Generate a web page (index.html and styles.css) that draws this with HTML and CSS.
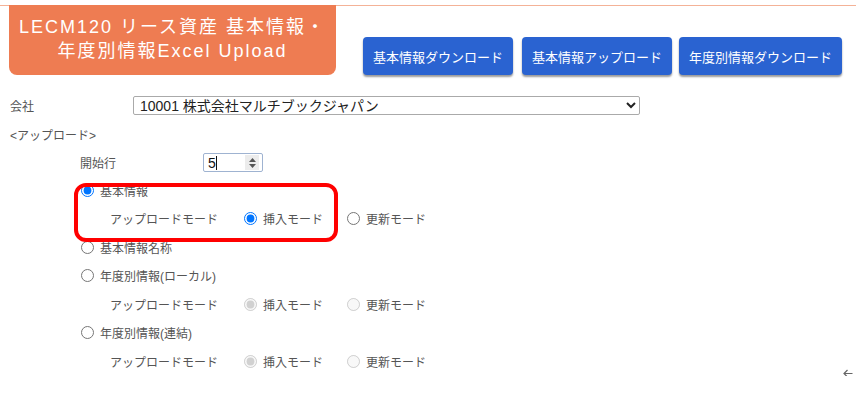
FILE: index.html
```html
<!DOCTYPE html>
<html lang="ja">
<head>
    <meta charset="UTF-8">
    <meta name="viewport" content="width=device-width, initial-scale=1.0">
    <title>LECM120 リース資産 Excel Upload</title>
    <link rel="stylesheet" href="styles.css">
</head>
<body>
    <header class="top">
        <div class="title">LECM120 リース資産 基本情報・<br>年度別情報Excel Upload</div>
        <div class="actions">
            <button class="btn">基本情報ダウンロード</button>
            <button class="btn">基本情報アップロード</button>
            <button class="btn">年度別情報ダウンロード</button>
        </div>
    </header>

    <main class="content">
        <div class="company">
            <label class="company-label" for="company">会社</label>
            <select id="company" class="company-select">
                <option>10001 株式会社マルチブックジャパン</option>
            </select>
        </div>

        <div class="section-title">&lt;アップロード&gt;</div>

        <div class="upload">
            <div class="row start-row">
                <span class="start-label">開始行</span>
                <div class="num-input">
                    <span class="num-value">5</span><span class="caret"></span>
                    <span class="spin">
                        <svg width="9" height="12" viewBox="0 0 9 12"><path d="M4.5 1 L8 5 H1 Z M4.5 11 L8 7 H1 Z" fill="#555"/></svg>
                    </span>
                </div>
            </div>

            <!-- red annotation around the selected option -->
            <div class="highlight"></div>

            <label class="row opt"><input type="radio" name="kind" checked> 基本情報</label>
            <div class="row mode">
                <span class="mode-label">アップロードモード</span>
                <label class="mode-opt"><input type="radio" name="mode1" checked> 挿入モード</label>
                <label class="mode-opt"><input type="radio" name="mode1"> 更新モード</label>
            </div>

            <label class="row opt"><input type="radio" name="kind"> 基本情報名称</label>

            <label class="row opt"><input type="radio" name="kind"> 年度別情報(ローカル)</label>
            <div class="row mode">
                <span class="mode-label">アップロードモード</span>
                <label class="mode-opt"><input type="radio" name="mode2" checked disabled> 挿入モード</label>
                <label class="mode-opt"><input type="radio" name="mode2" disabled> 更新モード</label>
            </div>

            <label class="row opt"><input type="radio" name="kind"> 年度別情報(連結)</label>
            <div class="row mode last">
                <span class="mode-label">アップロードモード</span>
                <label class="mode-opt"><input type="radio" name="mode3" checked disabled> 挿入モード</label>
                <label class="mode-opt"><input type="radio" name="mode3" disabled> 更新モード</label>
                <span class="back">
                    <svg width="10" height="9" viewBox="0 0 10 9"><path d="M9.5 4.5 H1 M4.5 1 L1 4.5 L4.5 8" fill="none" stroke="#666" stroke-width="1.2"/></svg>
                </span>
            </div>
        </div>
    </main>
</body>
</html>
```

FILE: styles.css
```css
body {
    margin: 0;
    background-color: #fff;
    font-family: "Liberation Sans", "Noto Sans CJK JP", sans-serif;
    color: #555;
    font-size: 12px;
}

.top {
    display: flex;
    align-items: flex-end;
    margin-top: 5px;
    border-top: 1px solid #f4b297;
}

.title {
    width: 327px;
    height: 70px;
    margin-top: -1px;
    margin-left: 9px;
    box-sizing: border-box;
    padding-top: 10px;
    background-color: #ee7c52;
    border-radius: 0 0 8px 8px;
    color: #fff;
    font-size: 18px;
    line-height: 24px;
    letter-spacing: 2px;
    text-align: center;
}

.actions {
    display: flex;
    gap: 9px;
    margin-left: 27px;
}

.btn {
    height: 38px;
    padding: 0 10px;
    border: none;
    border-radius: 4px;
    background-color: #2a63d1;
    box-shadow: 0 2px 2px rgba(0, 0, 0, 0.4);
    color: #fff;
    font-family: "Liberation Sans", "Noto Sans CJK JP", sans-serif;
    font-size: 13px;
    cursor: pointer;
}

.btn:last-child {
    padding: 0 10px;
    margin-left: -2px;
}

.content {
    padding-left: 10px;
}

.company {
    display: flex;
    align-items: center;
    margin-top: 21px;
    height: 19px;
}

.company-label {
    width: 123px;
}

.company-select {
    width: 507px;
    height: 19px;
    padding: 0 2px;
    border: 1px solid #aaa;
    border-radius: 2px;
    background-color: #fff;
    color: #222;
    font-family: "Liberation Sans", "Noto Sans CJK JP", sans-serif;
    font-size: 14px;
}

.section-title {
    height: 28px;
    line-height: 32px;
    margin-top: 5px;
}

.upload {
    position: relative;
}

.row {
    display: flex;
    align-items: center;
    height: 28.5px;
}

.start-row {
    padding-left: 70px;
    align-items: flex-end;
    height: 24px;
    margin-bottom: 4px;
}

.start-label {
    width: 123px;
    padding-bottom: 1px;
}

.num-input {
    display: flex;
    align-items: center;
    width: 60px;
    height: 19px;
    box-sizing: border-box;
    padding-left: 4px;
    border: 1px solid #9fb3d1;
    border-radius: 2px;
    color: #111;
    font-size: 14px;
}

.caret {
    width: 1px;
    height: 14px;
    background-color: #111;
}

.spin {
    display: flex;
    align-items: center;
    justify-content: center;
    width: 14px;
    height: 15px;
    margin-left: auto;
    margin-right: 3px;
    background-color: #ececec;
}

.opt {
    padding-left: 71px;
}

.opt input,
.mode-opt input {
    width: 13px;
    height: 13px;
    margin: 0 6px 0 0;
}

.mode {
    padding-left: 100px;
}

.mode-label {
    width: 134px;
}

.mode-opt {
    display: flex;
    align-items: center;
    width: 103px;
}

.back {
    display: flex;
    margin-left: auto;
    margin-right: 3px;
    margin-top: 24px;
}

.highlight {
    position: absolute;
    left: 64px;
    top: 35px;
    width: 264px;
    height: 59px;
    box-sizing: border-box;
    border: 4px solid #f00;
    border-radius: 12px;
}
```
